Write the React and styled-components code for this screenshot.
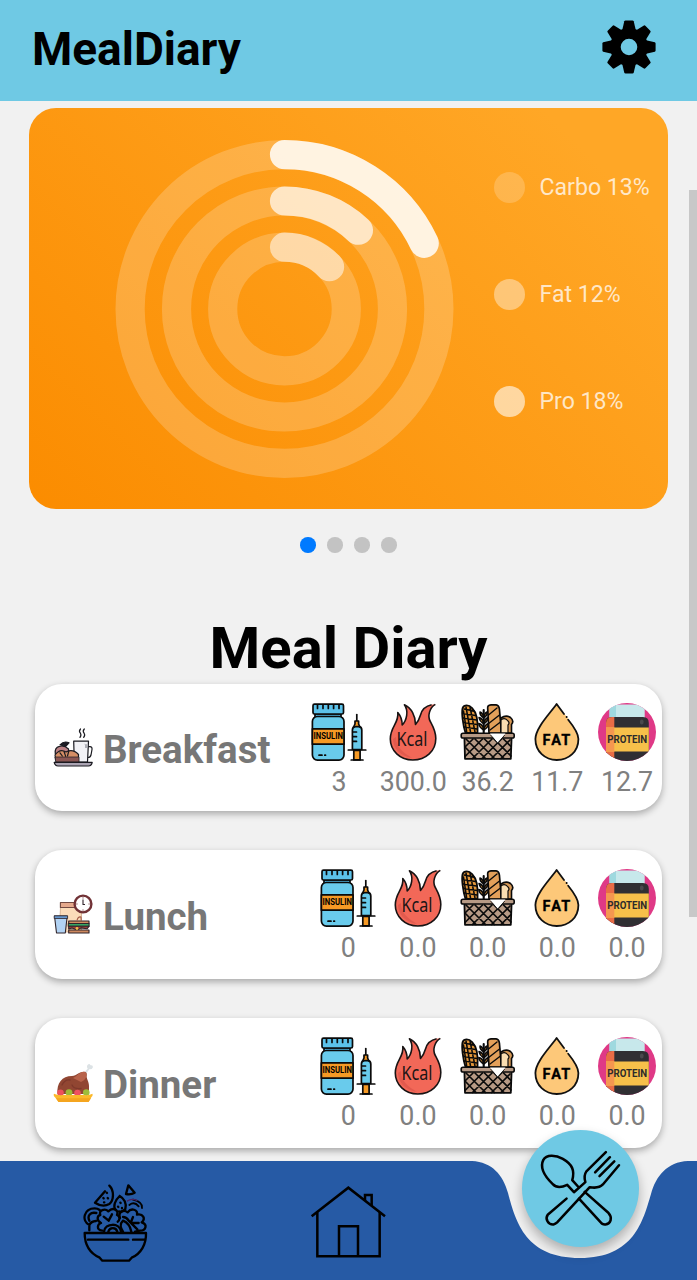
import React from "react";
import styled, { createGlobalStyle } from "styled-components";

const GlobalStyle = createGlobalStyle`
  * { box-sizing: border-box; }
  body { margin: 0; background: #f1f1f1; font-family: Roboto, "Noto Sans", sans-serif; }
`;

const Screen = styled.div`
  position: relative;
  width: 697px;
  height: 1280px;
  overflow: hidden;
  display: flex;
  flex-direction: column;
  background: #f1f1f1;
`;

const Header = styled.header`
  height: 101px;
  flex: none;
  display: flex;
  align-items: center;
  justify-content: space-between;
  padding: 0 41px 7px 32px;
  background: #6fc9e4;
`;

const AppTitle = styled.h1`
  margin: 0;
  padding-top: 3px;
  font-size: 46px;
  font-weight: 700;
  line-height: 56px;
  color: #000;
`;

const Content = styled.main`
  flex: 1;
  min-height: 0;
  display: flex;
  flex-direction: column;
  padding: 7px 29px 0;
`;

const ChartCard = styled.section`
  height: 401px;
  flex: none;
  display: flex;
  padding: 28px 0 0 83px;
  border-radius: 27px;
  background: linear-gradient(45deg, #fb8c00, #ffa726 88%);
`;

const Legend = styled.ul`
  list-style: none;
  margin: 35px 0 0 36px;
  padding: 0;
  display: flex;
  flex-direction: column;
  gap: 75px;
`;

const LegendItem = styled.li`
  display: flex;
  align-items: center;
  gap: 15px;
  height: 32px;
  font-size: 23.1px;
  line-height: 34px;
  white-space: nowrap;
  color: rgba(255, 255, 255, 0.76);
`;

const LegendLabel = styled.span`
  padding-top: 2px;
`;

const LegendDot = styled.span`
  width: 31px;
  height: 31px;
  margin-left: 0.5px;
  border-radius: 50%;
  background: rgba(255, 255, 255, ${(p) => p.$alpha});
`;

const Pager = styled.div`
  flex: none;
  display: flex;
  justify-content: center;
  gap: 11.5px;
  margin: 28px 0 0;
`;

const PagerDot = styled.span`
  width: 15.5px;
  height: 15.5px;
  border-radius: 50%;
  background: ${(p) => (p.$active ? "#007aff" : "#c3c3c3")};
`;

const SectionTitle = styled.h2`
  flex: none;
  margin: 60px 0 0;
  height: 71.5px;
  line-height: 71px;
  font-size: 58px;
  font-weight: 700;
  text-align: center;
  color: #000;
`;

const MealList = styled.div`
  flex: none;
  display: flex;
  flex-direction: column;
  gap: 38.5px;
  padding: 0 6px;
`;

const MealCard = styled.article`
  height: ${(p) => p.$height}px;
  display: flex;
  align-items: center;
  padding: 0 6px 0 18px;
  border-radius: 27px;
  background: #fff;
  box-shadow: 0 3px 7px rgba(0, 0, 0, 0.3);
`;

const MealName = styled.h3`
  margin: 0 0 0 10px;
  padding-top: 5px;
  font-size: 38.5px;
  line-height: 44px;
  font-weight: 700;
  color: #777;
`;

const Stats = styled.div`
  margin: 19px 0 auto auto;
  display: flex;
  gap: 11.7px;
`;

const Stat = styled.div`
  min-width: 58px;
  display: flex;
  flex-direction: column;
  align-items: center;
  gap: 5px;
`;

const StatValue = styled.span`
  font-size: 26.8px;
  line-height: 32px;
  color: #808080;
`;

const ScrollThumb = styled.div`
  position: absolute;
  right: 0;
  top: 190px;
  width: 8px;
  height: 727px;
  background: #c8c8c8;
`;

const TabBar = styled.nav`
  position: relative;
  height: 119px;
  flex: none;
  display: flex;
  align-items: flex-start;
  padding: 22px 0 0 83px;
  gap: 161px;
`;

const TabBackdrop = styled.svg`
  position: absolute;
  inset: 0;
`;

const TabIcon = styled.svg`
  position: relative;
  flex: none;
`;

const ActionButton = styled.button`
  position: absolute;
  left: 522px;
  top: -31px;
  width: 117px;
  height: 117px;
  padding: 0;
  border: 0;
  border-radius: 50%;
  background: #6fc9e4;
  box-shadow: 0 6px 12px rgba(0, 0, 0, 0.28);
`;

const GearIcon = () => (
  <svg width="54" height="54" viewBox="-27 -27 54 54">
    {[0, 45, 90, 135, 180, 225, 270, 315].map((a) => (
      <path key={a} d="M-7 -16 L-4.7 -25.8 Q-4.4 -26.6 -3.5 -26.6 H3.5 Q4.4 -26.6 4.7 -25.8 L7 -16 Z" transform={`rotate(${a})`} />
    ))}
    <circle r="13.6" fill="none" stroke="#000" strokeWidth="10.6" />
  </svg>
);

const rings = [
  { r: 154.4, value: 0.18, alpha: 0.84 },
  { r: 108, value: 0.12, alpha: 0.68 },
  { r: 61.8, value: 0.13, alpha: 0.53 },
];

const RingChart = () => (
  <svg width="345" height="345" viewBox="-172.5 -173 345 345">
    <g fill="none" stroke="#fff" strokeWidth="29.2" strokeLinecap="round">
      {rings.map(({ r, value, alpha }) => {
        const a = value * 2 * Math.PI;
        return (
          <React.Fragment key={r}>
            <circle r={r} strokeOpacity="0.2" />
            <path d={`M0 ${-r} A${r} ${r} 0 0 1 ${r * Math.sin(a)} ${-r * Math.cos(a)}`} strokeOpacity={alpha} />
          </React.Fragment>
        );
      })}
    </g>
  </svg>
);

const InsulinIcon = () => (
  <svg width="58" height="58" viewBox="0 0 58 58">
    <g stroke="#0a0a0a" strokeWidth="1.7" strokeLinejoin="round" strokeLinecap="round">
      <path d="M5 11 H31 V15 H5Z" fill="#4fb0dc" />
      <rect x="3" y="1.2" width="30.5" height="9.8" rx="1.5" fill="#5cc2ea" />
      <path d="M7.5 2 V5.5 M13 2 V5.5 M18.3 2 V5.5 M23.6 2 V5.5 M29 2 V5.5" />
      <rect x="2.4" y="13.5" width="31.6" height="43.6" rx="5" fill="#69cbec" />
      <rect x="2.4" y="25.8" width="31.6" height="15.4" fill="#f69a25" />
      <path d="M9 52.2 H12 M14.8 52.2 H15.5" />
      <path d="M46.8 11.5 V18" />
      <path d="M45 18 H48.6 V21 L50 24 H43.6 L45 21Z" fill="#f69a25" />
      <path d="M42.4 46.5 V27 Q42.4 23.6 45.6 23.6 H48.6 Q51.8 23.6 51.8 27 V46.5Z" fill="#69cbec" />
      <path d="M43 29 H46.5 M43 33.7 H46.5 M43 38.4 H46.5" />
      <rect x="43.8" y="47.3" width="6.3" height="9.6" fill="#f69a25" />
      <path d="M38.3 47 H55.8 M41.2 57 H53" />
    </g>
    <text x="3.6" y="36.4" fontFamily="Roboto, sans-serif" fontWeight="700" fontSize="8.3" textLength="29.4" lengthAdjust="spacingAndGlyphs">INSULIN</text>
  </svg>
);

const KcalIcon = () => (
  <svg width="58" height="58" viewBox="0 0 58 58">
    <path
      d="M28.8 57 C16 57 6.3 47.5 6.3 36 C6.3 23.5 15.2 20 13.8 9.5 C17.2 13.5 18.2 17 18.2 22 C22.5 18 25 8 20.4 1.8 C27.5 5 31.5 13 31.5 21.5 C34.2 18.5 35.5 15.5 36.5 12 C38.5 4.5 44 1.8 51.5 1.3 C45.5 4.5 43.3 13 46.3 18.5 C49 23.5 51.8 28 51.8 35.5 C51.8 48 42 57 28.8 57Z"
      fill="#f26858" stroke="#191414" strokeWidth="1.6" strokeLinejoin="round" strokeDasharray="148 4 100"
    />
    <path d="M9 36 C9 45 16 53 28 55 C20 50 12 45 12 34Z" fill="#d9534a" opacity="0.65" />
    <text x="12.5" y="42.7" fontFamily="'Noto Sans', sans-serif" fontSize="20" fill="#1b1515" textLength="31" lengthAdjust="spacingAndGlyphs">Kcal</text>
  </svg>
);

const BasketIcon = () => (
  <svg width="58" height="58" viewBox="0 0 58 58">
    <g stroke="#0a0a0a" strokeLinejoin="round" strokeLinecap="round">
      <path d="M6.5 30 C4 22 2.4 10 3.6 5 C5 1.5 10 1.5 13 5 C18 10 19.3 20 18.5 30Z" fill="#e2963a" strokeWidth="1.8" />
      <path d="M5 6 L15 8 M3.7 10.5 L16.5 12.5 M4 15 L17.5 17 M4.6 19.5 L18 21.5 M5.4 24 L18 26 M7 4 L11.5 29 M11 4 L16 29 M4.5 8 L7.7 29" strokeWidth="1.5" />
      <path d="M28.7 5.5 Q28.2 2 32 1.8 H37 Q40 2.2 40.4 6 L42.5 30 H30Z" fill="#e3a05a" strokeWidth="1.7" />
      <path d="M29.5 12 L38 5 M30.3 20 L40.5 12 M31 27 L41.5 19" strokeWidth="1.4" />
      <path d="M42 30 V15 Q47 11.5 51.5 14.5 Q55.5 18 52.5 21.5 V30Z" fill="#d79956" strokeWidth="1.6" />
      <path d="M42 30 V17 Q46 14 49 18 Q51 20 49 22 V30Z" fill="#f9ddb1" strokeWidth="1.2" />
      <path d="M24.7 7 V30" strokeWidth="2.1" />
      <path d="M24.7 15 Q20.5 12 21 9 Q24 10 24.7 15 Q25.5 10 28 9 Q29 12 24.7 15 M24.7 21 Q20.5 18 20 14.5 Q24 15.5 24.7 21 Q25.5 16 29 14.5 Q29 18 24.7 21 M24.7 27 Q20 24 19.8 20.5 Q24 21.5 24.7 27 Q25.5 22 29.4 20.5 Q29 25 24.7 27" fill="#dc943a" strokeWidth="1.5" />
      <path d="M5.4 34 H52.6 L51.8 55.8 H6Z" fill="#b79a85" strokeWidth="1.8" />
      <path d="M6 44 L17 55.5 M7 36 L26.5 55.5 M16 36 L35.5 55.5 M25.5 36 L45 55.5 M35 36 L52 53 M44.5 36 L52 43.5 M14 36 L6 44 M23.5 36 L6 53.5 M33 36 L13.5 55.5 M42.5 36 L23 55.5 M51 37 L32.5 55.5 M52 45.5 L42 55.5" strokeWidth="1.7" />
      <rect x="2.2" y="30.2" width="53" height="4.8" rx="1.8" fill="#b79a85" strokeWidth="1.6" />
    </g>
    <path d="M31 30.5 H46.5 L38.7 40Z" fill="#fff" />
    <path d="M31.5 32 L38.7 40 L45.8 32" fill="none" stroke="#0a0a0a" strokeWidth="0.8" />
  </svg>
);

const FatIcon = () => (
  <svg width="58" height="58" viewBox="0 0 58 58">
    <path d="M28.6 1 C22 10.5 7.4 25 7.4 36 C7.4 48.5 17 57 28.8 57 C41 57 50.4 48.5 50.4 36 C50.4 25 35 10.5 28.6 1Z" fill="#fdc879" />
    <path d="M40.2 16.8 C46 24 50.4 30 50.4 36 C50.4 48.5 41 57 28.8 57 C17 57 7.4 48.5 7.4 36 C7.4 25 22 10.5 28.6 1 L36 11" fill="none" stroke="#111" strokeWidth="1.8" strokeLinecap="round" strokeLinejoin="round" />
    <circle cx="38.6" cy="14" r="1" />
    <g fontFamily="Roboto, sans-serif" fontWeight="700" fontSize="14.5" textAnchor="middle" stroke="#000" strokeWidth="0.3">
      <text x="18.4" y="41.6">F</text>
      <text x="28.1" y="41.6">A</text>
      <text x="37.8" y="41.6">T</text>
    </g>
  </svg>
);

const ProteinIcon = () => (
  <svg width="58" height="58" viewBox="0 0 58 58">
    <defs>
      <clipPath id="badge"><circle cx="29" cy="29" r="29" /></clipPath>
    </defs>
    <g clipPath="url(#badge)">
      <rect width="58" height="58" fill="#df3986" />
      <path d="M11.5 15 V5 Q11.5 1.5 15 1.5 H43 Q46.7 1.5 46.7 5 V15Z" fill="#c7e8eb" />
      <path d="M11.5 15 V5 Q11.5 1.5 15 1.5 H18 V15Z" fill="#9fd9df" />
      <path d="M8 20 Q8 14 14 14 H45 Q50.8 14 50.8 20 V60 H8Z" fill="#302f33" />
      <path d="M8 20 Q8 14 14 14 H16.3 V60 H8Z" fill="#e96c46" />
      <rect x="8" y="24.5" width="42.8" height="24" fill="#f7c04a" />
      <rect x="8" y="24.5" width="8.3" height="24" fill="#f59750" />
      <rect x="42" y="16.5" width="3.5" height="5" rx="1.7" fill="#4a494d" />
    </g>
    <text x="9.2" y="40.2" fontFamily="Roboto, sans-serif" fontWeight="700" fontSize="10.8" fill="#2d2b2b" textLength="40" lengthAdjust="spacingAndGlyphs">PROTEIN</text>
  </svg>
);

const BreakfastIcon = () => (
  <svg width="40" height="40" viewBox="0 0 40 40">
    <g stroke="#1a1a20" strokeWidth="1.2" strokeLinejoin="round" strokeLinecap="round">
      <path d="M27.5 1 Q25.5 3.2 27.3 5 Q28.7 7 27 9.4 M31.3 1 Q29.3 3.2 31 5 Q32.5 7 30.7 9.4" fill="none" />
      <path d="M35 18.7 H37 Q39.3 18.7 39 21.5 L38 27 Q37.3 29.5 35 29.5" fill="none" />
      <path d="M20.7 13.2 H35.5 L34.5 34 H21.3Z" fill="#f2f2f6" />
      <path d="M2.3 26 Q1.3 19.5 6.5 18.3 Q11.5 17 15.5 21 L16 27Z" fill="#bb8084" />
      <path d="M7 16.8 Q11 12.5 16 14.8 L12.5 18.5Z" fill="#1b1c24" />
      <path d="M2 27 Q7 20 13 24 Q20 20.5 25.5 26.5 V34 H3.2Z" fill="#d58e65" />
      <path d="M7 24.8 L9.3 28 M11 23.5 L12.7 28.4 M15.8 23 L14.5 28" fill="none" />
      <path d="M2.2 29 H26 V34 H3.2Z" fill="#8a5653" strokeWidth=".7" />
      <path d="M1.2 34.4 H39.2 Q38.6 38 35.5 38 H5 Q2 38 1.2 34.4Z" fill="#aaa3b2" />
    </g>
    <path d="M31 16.2 H31.2 M33 16.2 V20" stroke="#6b6d78" strokeWidth="1" />
  </svg>
);

const LunchIcon = () => (
  <svg width="40" height="40" viewBox="0 0 40 40">
    <g stroke="#30242a" strokeWidth="1.1" strokeLinejoin="round">
      <path d="M7.5 13 L6.3 38 H28.5 V13Z" fill="#fbdcb9" stroke="#c99f7d" strokeWidth=".7" />
      <path d="M7.4 8.5 H24 V13.5 H7.4Z" fill="#e5a98c" stroke="#714a42" />
      <circle cx="30" cy="10" r="8.4" fill="#fff" stroke="#713236" strokeWidth="2.4" />
      <path d="M30 5.5 V10.5 H32" fill="none" />
      <path d="M1.5 22 H14.2 L12.3 39 H3.5Z" fill="#b2d3f4" />
      <path d="M1.2 21.8 H14.6 V24.5 H1.2Z" fill="#6697ce" strokeWidth=".8" />
      <path d="M15.7 29.5 V27 H36 V29.5Z" fill="#d28d61" />
      <rect x="15.3" y="29.5" width="20.8" height="2.7" fill="#36a563" />
      <path d="M15.7 32.3 H36 L34 34.8 L28 33.9 L24 36 L19 33.9 L15.7 35Z" fill="#9d3e39" />
      <path d="M15.7 36 H36 V39 H15.7Z" fill="#cd885e" />
      <path d="M24 26.5 Q25 22.3 28 23 L28.2 26.5" fill="none" stroke="#a55c49" />
    </g>
    <circle cx="24" cy="34.5" r="1.4" fill="#f1bd4e" />
    <path d="M30 3.2 V4.6 M30 15.4 V16.8 M23.2 10 H24.6 M35.4 10 H36.8" stroke="#713236" strokeWidth=".8" />
  </svg>
);

const DinnerIcon = () => (
  <svg width="40" height="40" viewBox="0 0 40 40">
    <path d="M30.5 10 L34.7 5.8 Q33 3 35 1.5 Q36.5 .3 37.5 2.3 Q40.3 2.2 39.8 4.4 Q39 6.5 36.3 6.2 L33 11Z" fill="#dce2e5" />
    <path d="M4.5 31 C3.5 20 9 13 19 13 C24 13 25.5 8.8 31 8.8 Q34 9 33.7 12 C33 15.5 36 18 36 23 V31Z" fill="#914632" />
    <path d="M20 15 C24 13.5 26 9 31 8.8 Q34 9 33.7 12 Q33 17 28 19Z" fill="#b8634b" />
    <path d="M19 22 Q21 26.5 28 25.5 M9 22 Q12 16 17 17" fill="none" stroke="#7e382b" strokeWidth="1.3" strokeLinecap="round" />
    <circle cx="7.5" cy="29.8" r="3.3" fill="#ed515b" />
    <circle cx="16" cy="29.6" r="3.4" fill="#9dba36" />
    <circle cx="24.5" cy="30" r="3.3" fill="#ee5060" />
    <circle cx="33.3" cy="29.6" r="3.3" fill="#9ebd3b" />
    <path d="M1 30.8 Q5 32.8 10 32 H31 Q36 32.8 39.3 30.8 Q40.3 32.5 38.5 34 L35.5 39 H5.5 L2 34.3 Q0 32.8 1 30.8Z" fill="#fcb92b" />
    <path d="M3 35.2 H38 L35.5 39 H5.5Z" fill="#f5a51f" />
  </svg>
);

const SaladIcon = () => (
  <TabIcon width="66" height="80" viewBox="40 38 198 240">
    <g fill="none" stroke="#000" strokeWidth="7" strokeLinecap="round" strokeLinejoin="round">
      <path d="M45 188 H229 C230 222 214 250 186 262 L178 271 H98 L90 262 C61 249 45 224 45 188Z" />
      <path d="M55 208 H176 M190 208 H226" />
      <path d="M119 46 C134 60 133 91 119 101 C105 109 88 105 76 97 L106 63" />
      <path d="M111 67 L112 68 M101 83 L102 84 M114 83 L115 84 M103 96 L104 96" />
      <path d="M176 45 L195 67 Q184 74 169 71Z" />
      <path d="M150 77 C136 90 129 108 138 119 M150 77 C163 84 172 99 167 116 Q160 126 148 123" />
      <path d="M152 97 L153 98 M145 109 L146 110 M157 113 L157 114" />
      <path d="M59 180 V164 C34 151 43 114 75 114 Q84 114 90 119 M59 151 C52 136 62 124 80 128 M59 164 Q64 153 79 152" />
      <path d="M98 181 C78 178 84 161 94 158 C78 150 84 135 92 134 C86 119 106 113 116 123 C130 109 148 119 142 134 C154 139 149 151 144 154 M102 139 L117 151 M127 132 L117 151" />
      <path d="M103 184 C106 157 151 156 154 184 M116 184 C120 170 139 170 143 184" />
      <path d="M151 143 C144 124 162 117 174 126 C185 111 205 118 202 133 C220 129 229 145 216 156 C235 162 229 181 211 181 L196 184 M160 140 Q170 140 177 151 L203 177 M190 140 L184 155 M184 158 H207" />
      <path d="M160 151 C150 160 153 174 160 184 M160 151 Q180 159 185 184" />
      <path d="M179 104 Q194 92 207 108 M190 88 Q220 95 217 113" strokeWidth="5.5" />
      <path d="M173 92 Q185 83 202 90" stroke="#4b235e" strokeWidth="4" />
    </g>
  </TabIcon>
);

const HomeIcon = () => (
  <TabIcon width="77" height="77" viewBox="30 38 231 231">
    <g fill="none" stroke="#000" strokeWidth="7.5">
      <path d="M35 138 L145 52 L255 138" />
      <path d="M52 126 V258 H239 V126" />
      <path d="M117 258 V168 H174 V258" />
      <path d="M195 91 V74 H215 V107" />
    </g>
  </TabIcon>
);

const CutleryIcon = () => (
  <svg width="117" height="117" viewBox="187.5 31 348 348">
    <g fill="none" stroke="#000" strokeWidth="7.5" strokeLinecap="round" strokeLinejoin="round">
      <path d="M320 235 L264 283 C255 296 266 313 281 312 Q287 311 292 306 L389 201 Q416 206 428 193 L476 136" />
      <path d="M437 97 L379 154 Q370 167 376 186 L342 216 L322 194 C306 202 289 203 279 192 C256 170 239 144 251 120 C260 103 288 105 309 117 C337 133 345 151 337 180 L354 199" />
      <path d="M449 112 L405 157 M462 124 L418 168" />
      <path d="M374 215 L445 278 C458 292 451 310 436 312 Q426 313 421 305 L357 235" />
    </g>
  </svg>
);

const legend = [
  { label: "Carbo 13%", alpha: 0.2 },
  { label: "Fat 12%", alpha: 0.4 },
  { label: "Pro 18%", alpha: 0.59 },
];

const statIcons = [InsulinIcon, KcalIcon, BasketIcon, FatIcon, ProteinIcon];

const meals = [
  { name: "Breakfast", Icon: BreakfastIcon, height: 127, values: ["3", "300.0", "36.2", "11.7", "12.7"] },
  { name: "Lunch", Icon: LunchIcon, height: 129.5, values: ["0", "0.0", "0.0", "0.0", "0.0"] },
  { name: "Dinner", Icon: DinnerIcon, height: 130, values: ["0", "0.0", "0.0", "0.0", "0.0"] },
];

export default function App() {
  return (
    <Screen>
      <GlobalStyle />
      <Header>
        <AppTitle>MealDiary</AppTitle>
        <GearIcon />
      </Header>
      <Content>
        <ChartCard>
          <RingChart />
          <Legend>
            {legend.map((item) => (
              <LegendItem key={item.label}>
                <LegendDot $alpha={item.alpha} />
                <LegendLabel>{item.label}</LegendLabel>
              </LegendItem>
            ))}
          </Legend>
        </ChartCard>
        <Pager>
          {[0, 1, 2, 3].map((i) => (
            <PagerDot key={i} $active={i === 0} />
          ))}
        </Pager>
        <SectionTitle>Meal Diary</SectionTitle>
        <MealList>
          {meals.map(({ name, Icon, height, values }) => (
            <MealCard key={name} $height={height}>
              <Icon />
              <MealName>{name}</MealName>
              <Stats>
                {values.map((value, i) => {
                  const StatIcon = statIcons[i];
                  return (
                    <Stat key={i}>
                      <StatIcon />
                      <StatValue>{value}</StatValue>
                    </Stat>
                  );
                })}
              </Stats>
            </MealCard>
          ))}
        </MealList>
      </Content>
      <ScrollThumb />
      <TabBar>
        <TabBackdrop width="697" height="119" viewBox="0 0 697 119">
          <path
            d="M0 0 H472 C492 1 503 14 508 32 C516 62 526 97 580 97 C634 97 643 60 651 33 C656 15 667 1 688 0 H697 V119 H0Z"
            fill="#265aa5"
          />
        </TabBackdrop>
        <SaladIcon />
        <HomeIcon />
        <ActionButton aria-label="Add meal">
          <CutleryIcon />
        </ActionButton>
      </TabBar>
    </Screen>
  );
}
